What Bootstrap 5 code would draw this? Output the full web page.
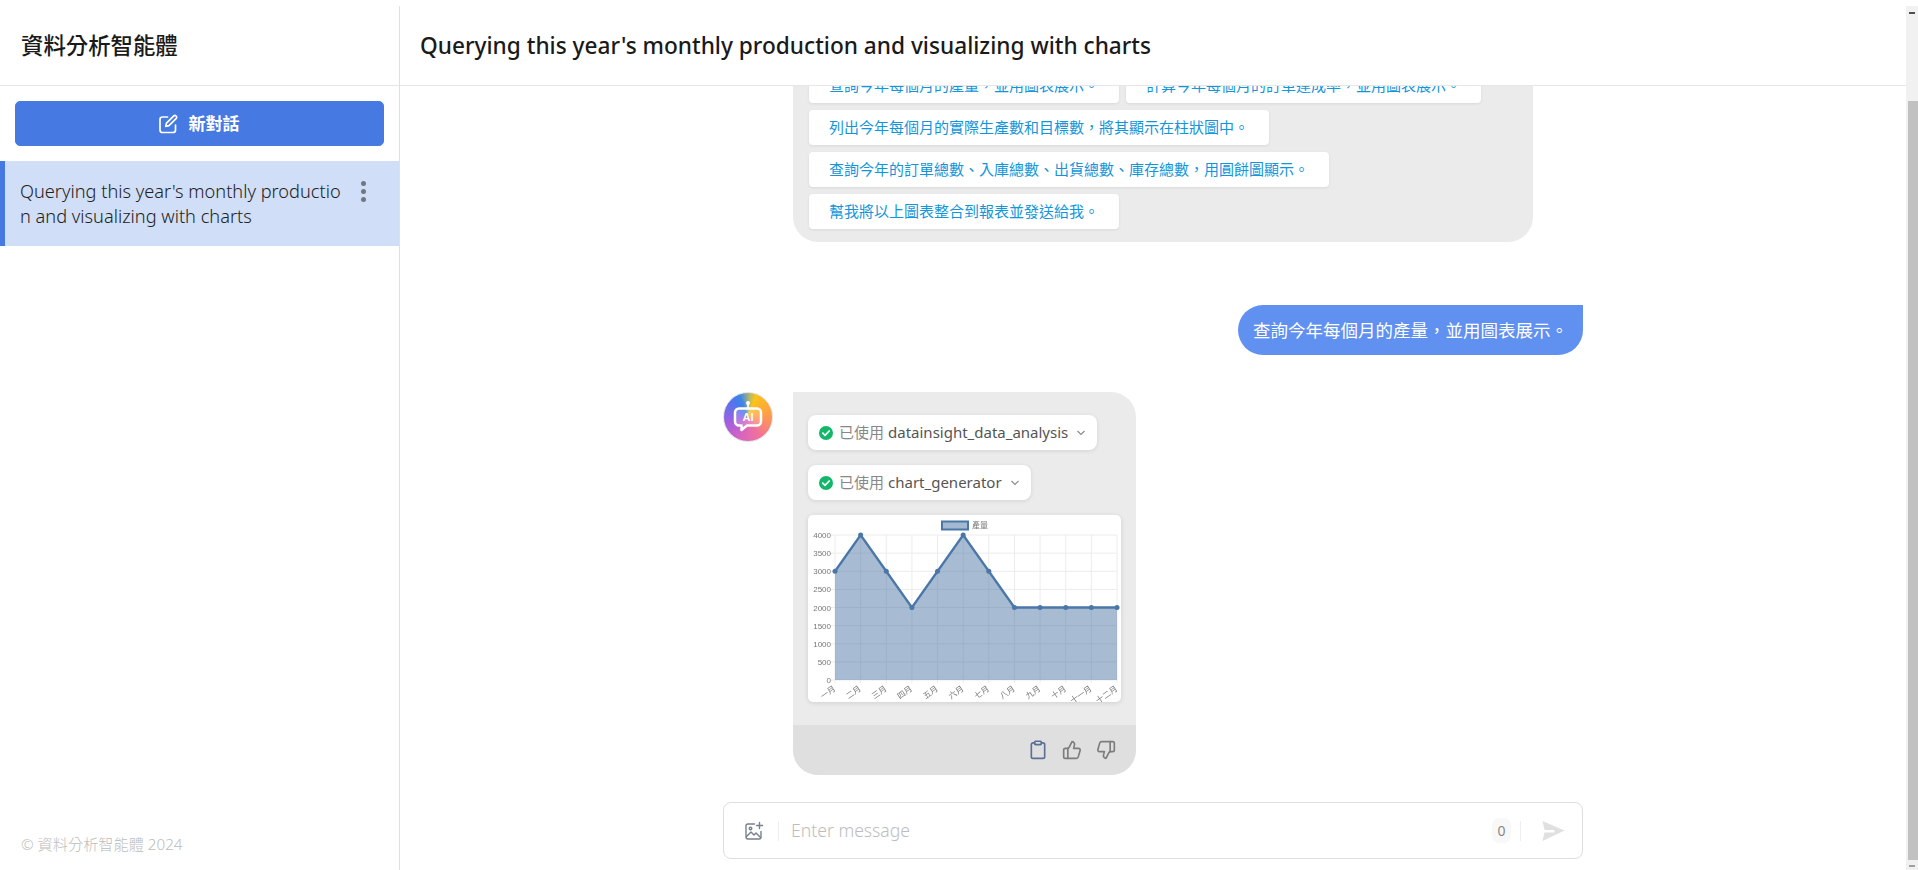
<!DOCTYPE html>
<html lang="zh-Hant">

<head>
    <meta charset="UTF-8">
    <meta name="viewport" content="width=device-width, initial-scale=1.0">
    <title>資料分析智能體</title>
    <link rel="stylesheet" href="https://cdn.jsdelivr.net/npm/bootstrap@5.3.2/dist/css/bootstrap.min.css">
    <style>
        html, body {
            height: 100%;
            overflow: hidden;
        }

        body {
            font-family: "Noto Sans", "Noto Sans CJK TC", sans-serif;
            background-color: #fff;
            padding-top: 6px;
            color: #333;
        }

        .app-wrap { height: 100%; }

        .side-panel {
            width: 400px;
            border-right: 1px solid #e0e0e0;
        }

        .head-bar {
            height: 80px;
            border-bottom: 1px solid #e6e6e6;
            font-size: 22.4px;
            font-weight: 500;
            color: #1a1a1a;
        }

        .side-head { padding-left: 21px; }
        .main-head { padding-left: 20px; font-size: 22.65px; }

        .new-chat {
            height: 45px;
            margin: 15px 15px;
            padding-right: 14px;
            background-color: #4679e2;
            border-color: #4679e2;
            border-radius: 5px;
            font-size: 17px;
            font-weight: 700;
            gap: 11px;
        }

        .new-chat:hover { background-color: #4679e2; border-color: #4679e2; }

        .session-item {
            height: 85px;
            background-color: #d0def7;
            border-left: 5px solid #4679e2;
            padding: 18px 54px 0 15px;
            font-size: 18.2px;
            font-weight: 300;
            line-height: 25px;
            word-break: break-all;
            color: #222;
        }

        .kebab {
            top: 20px;
            right: 32px;
            width: 6px;
            gap: 3px;
        }

        .kebab i {
            width: 5px;
            height: 5px;
            border-radius: 50%;
            background-color: #6f7785;
        }

        .copy-line {
            padding: 0 0 14px 21px;
            font-size: 15.2px;
            font-weight: 300;
            color: #bdbdbd;
        }

        .chat-scroll {
            min-height: 0;
            overflow: hidden;
        }

        .chat-col { width: 860px; }

        .bubble-ai {
            background-color: #ebebeb;
            border-radius: 0 25px 25px 25px;
            overflow: hidden;
        }

        .suggest-box {
            width: 740px;
            margin-left: 70px;
            padding: 16px 16px 13px;
            gap: 7px;
        }

        .suggest-chip {
            height: 35px;
            padding: 0 20px;
            background-color: #fff;
            border-radius: 4px;
            box-shadow: 0 1px 3px rgba(0, 0, 0, .08);
            color: #1296db;
            font-size: 15px;
            line-height: 35px;
            white-space: nowrap;
        }

        .bubble-user {
            margin-top: 63px;
            margin-bottom: 37px;
            height: 50px;
            padding: 0 15px;
            background-color: #6090f0;
            border-radius: 25px 0 25px 25px;
            color: #fff;
            font-size: 17.5px;
            line-height: 50px;
        }

        .bot-avatar {
            width: 50px;
            height: 50px;
            margin-right: 20px;
            border: 1px solid #e2e2e2;
            border-radius: 50%;
            background: conic-gradient(from 20deg, #fcc419 0deg, #ff9f45 60deg, #f0719c 130deg, #d764c0 180deg, #a15ee0 235deg, #4a78ee 300deg, #3f86e6 320deg, #b5b86a 345deg, #fcc419 360deg);
        }

        .bot-avatar svg { width: 30px; height: 34px; }

        .ai-text {
            font-family: "Liberation Sans", sans-serif;
            font-size: 11px;
            font-weight: 700;
            fill: #fff;
        }

        .ai-content {
            padding: 23px 15px 23px 15px;
            gap: 15px;
        }

        .tool-chip {
            height: 35px;
            padding: 0 11px;
            background-color: #fff;
            border-radius: 8px;
            box-shadow: 0 1px 4px rgba(0, 0, 0, .1);
            font-size: 15px;
            color: #555;
            white-space: nowrap;
        }

        .tool-chip em {
            font-style: normal;
            color: #888;
            margin: 0 4px 0 6px;
        }

        .chart-box {
            width: 313px;
            height: 187px;
            background-color: #fff;
            border-radius: 5px;
            box-shadow: 0 1px 5px rgba(0, 0, 0, .12);
            overflow: hidden;
        }

        .chart-box svg {
            display: block;
            filter: blur(.4px);
        }

        .chart-box text {
            font-family: "Liberation Sans", "Noto Sans CJK TC", sans-serif;
            font-size: 8px;
            fill: #777;
        }

        .ai-foot {
            height: 50px;
            background-color: #dfdfdf;
            padding-right: 20px;
            gap: 14px;
        }

        .input-bar {
            width: 860px;
            height: 57px;
            margin: 27px 0 11px;
            border: 1px solid #dedede;
            border-radius: 8px;
        }

        .input-field {
            border: 0;
            outline: 0;
            min-width: 0;
            font-size: 17.6px;
            font-weight: 300;
            color: #333;
            padding: 0 0 0 12px;
        }

        .input-field::placeholder { color: #bdbdbd; }

        .image-btn {
            width: 55px;
            padding-left: 20px;
            height: 20px;
            border-right: 1px solid #eee;
        }

        .count-pill {
            width: 19px;
            height: 25px;
            background-color: #f8f8f8;
            border-radius: 7px;
            font-size: 14px;
            line-height: 25px;
            color: #888;
            text-align: center;
        }

        .send-wrap {
            height: 20px;
            margin: 0 17px 0 9px;
            padding-left: 20px;
            border-left: 1px solid #eee;
        }

        .fake-scroll {
            width: 12px;
            background-color: #f1f1f1;
        }

        .fake-scroll b {
            display: block;
            height: 95px;
            background: linear-gradient(#505050, #505050) no-repeat 3px 6px / 6px 2px;
        }

        .fake-scroll i {
            display: block;
            flex: 1;
            margin-left: 2px;
            background-color: #c1c1c1;
        }

        .fake-scroll u {
            display: block;
            height: 10px;
            background: linear-gradient(#a0a0a0, #a0a0a0) no-repeat 3px 5px / 6px 2px;
        }
    </style>
</head>

<body>
    <div class="app-wrap d-flex">
        <!-- Sidebar -->
        <aside class="side-panel d-flex flex-column flex-shrink-0">
            <div class="head-bar side-head d-flex align-items-center">資料分析智能體</div>
            <button type="button" class="btn btn-primary new-chat d-flex align-items-center justify-content-center">
                <svg width="20" height="20" viewBox="0 0 20 20" fill="none" stroke="#fff" stroke-width="1.7" stroke-linecap="round" stroke-linejoin="round">
                    <path d="M9.5 3H4a2.5 2.5 0 0 0-2 2.5V16a2.5 2.5 0 0 0 2.5 2.5H15a2.5 2.5 0 0 0 2.5-2.5v-5"/>
                    <path d="M15.8 1.8a1.8 1.8 0 0 1 2.5 2.5L11 11.6l-3.3.8.8-3.3z"/>
                </svg>
                新對話
            </button>
            <div class="session-item position-relative">
                Querying this year's monthly production and visualizing with charts
                <span class="kebab position-absolute d-flex flex-column"><i></i><i></i><i></i></span>
            </div>
            <div class="copy-line mt-auto">© 資料分析智能體 2024</div>
        </aside>

        <!-- Main -->
        <main class="d-flex flex-column flex-grow-1" style="min-width:0">
            <div class="head-bar main-head d-flex align-items-center flex-shrink-0">Querying this year's monthly production and visualizing with charts</div>

            <div class="chat-scroll flex-grow-1 d-flex flex-column justify-content-end align-items-center">
                <div class="chat-col d-flex flex-column">
                    <div class="bubble-ai suggest-box d-flex flex-wrap">
                        <span class="suggest-chip">查詢今年每個月的產量&#xFF0C;並用圖表展示。</span>
                        <span class="suggest-chip">計算今年每個月的訂單達成率&#xFF0C;並用圖表展示。</span>
                        <span class="suggest-chip">列出今年每個月的實際生產數和目標數&#xFF0C;將其顯示在柱狀圖中。</span>
                        <span class="suggest-chip">查詢今年的訂單總數、入庫總數、出貨總數、庫存總數&#xFF0C;用圓餅圖顯示。</span>
                        <span class="suggest-chip">幫我將以上圖表整合到報表並發送給我。</span>
                    </div>

                    <div class="bubble-user align-self-end">查詢今年每個月的產量&#xFF0C;並用圖表展示。</div>

                    <div class="d-flex align-items-start">
                        <div class="bot-avatar d-flex align-items-center justify-content-center flex-shrink-0">
                            <svg viewBox="0 0 30 34" fill="none" stroke="#fff" stroke-width="2.5" stroke-linejoin="round">
                                <circle cx="15" cy="3" r="2" fill="#fff" stroke="none"/>
                                <path d="M15 4v4" stroke-width="1.6"/>
                                <path d="M6 8.500h18a4 4 0 0 1 4 4v9a4 4 0 0 1-4 4H14L8.500 30v-4.500H6a4 4 0 0 1-4-4v-9a4 4 0 0 1 4-4z" fill="rgba(255,255,255,.18)"/>
                                <text class="ai-text" x="15" y="21" text-anchor="middle" stroke="none">AI</text>
                            </svg>
                        </div>
                        <div class="bubble-ai flex-shrink-0">
                            <div class="ai-content d-flex flex-column align-items-start">
                                <div class="tool-chip d-flex align-items-center">
                                    <svg width="14" height="14" viewBox="0 0 14 14"><circle cx="7" cy="7" r="7" fill="#12b76a"/><path d="M3.800 7.200l2.200 2.100 4.200-4.300" fill="none" stroke="#fff" stroke-width="1.700" stroke-linecap="round" stroke-linejoin="round"/></svg>
                                    <em>已使用</em>datainsight_data_analysis
                                    <svg class="ms-2" width="10" height="6" viewBox="0 0 10 6"><path d="M1.500 1l3.500 3.500L8.500 1" fill="none" stroke="#888" stroke-width="1.100"/></svg>
                                </div>
                                <div class="tool-chip d-flex align-items-center">
                                    <svg width="14" height="14" viewBox="0 0 14 14"><circle cx="7" cy="7" r="7" fill="#12b76a"/><path d="M3.800 7.200l2.200 2.100 4.200-4.300" fill="none" stroke="#fff" stroke-width="1.700" stroke-linecap="round" stroke-linejoin="round"/></svg>
                                    <em>已使用</em>chart_generator
                                    <svg class="ms-2" width="10" height="6" viewBox="0 0 10 6"><path d="M1.500 1l3.500 3.500L8.500 1" fill="none" stroke="#888" stroke-width="1.100"/></svg>
                                </div>
                                <div class="chart-box">
                                    <svg id="prod-chart" width="313" height="187" viewBox="0 0 313 187"></svg>
                                </div>
                            </div>
                            <div class="ai-foot d-flex align-items-center justify-content-end">
                                <svg width="20" height="20" viewBox="0 0 24 24" fill="none" stroke="#5c7096" stroke-width="2" stroke-linecap="round" stroke-linejoin="round">
                                    <rect x="8" y="1.500" width="8" height="4" rx="1"/>
                                    <path d="M16 3.500h2a2 2 0 0 1 2 2V20a2 2 0 0 1-2 2H6a2 2 0 0 1-2-2V5.500a2 2 0 0 1 2-2h2"/>
                                </svg>
                                <svg width="20" height="20" viewBox="0 0 24 24" fill="none" stroke="#7d7d7d" stroke-width="2" stroke-linecap="round" stroke-linejoin="round">
                                    <path d="M7 10v12"/>
                                    <path d="M15 5.880 14 10h5.830a2 2 0 0 1 1.920 2.560l-2.330 8A2 2 0 0 1 17.500 22H4a2 2 0 0 1-2-2v-8a2 2 0 0 1 2-2h2.760a2 2 0 0 0 1.790-1.110L12 2h0a3.130 3.130 0 0 1 3 3.880Z"/>
                                </svg>
                                <svg width="20" height="20" viewBox="0 0 24 24" fill="none" stroke="#7d7d7d" stroke-width="2" stroke-linecap="round" stroke-linejoin="round">
                                    <path d="M17 14V2"/>
                                    <path d="M9 18.120 10 14H4.170a2 2 0 0 1-1.920-2.560l2.330-8A2 2 0 0 1 6.500 2H20a2 2 0 0 1 2 2v8a2 2 0 0 1-2 2h-2.760a2 2 0 0 0-1.790 1.110L12 22h0a3.130 3.130 0 0 1-3-3.880Z"/>
                                </svg>
                            </div>
                        </div>
                    </div>
                </div>
            </div>

            <!-- Input -->
            <div class="input-bar d-flex align-items-center flex-shrink-0 align-self-center">
                <div class="image-btn d-flex align-items-center flex-shrink-0">
                    <svg width="20" height="20" viewBox="0 0 20 20" fill="none" stroke="#78808c" stroke-width="1.400" stroke-linecap="round" stroke-linejoin="round">
                        <path d="M10.500 3H4a2 2 0 0 0-2 2v11a2 2 0 0 0 2 2h11a2 2 0 0 0 2-2v-5.500"/>
                        <path d="M2.500 15.500 7 11l3 3 2-2 4.500 4.500"/>
                        <circle cx="6.500" cy="7.500" r="1.300"/>
                        <path d="M15.500 1.500v6M12.500 4.500h6"/>
                    </svg>
                </div>
                <input class="input-field flex-grow-1" type="text" placeholder="Enter message">
                <span class="count-pill flex-shrink-0">0</span>
                <div class="send-wrap d-flex align-items-center flex-shrink-0">
                    <svg width="24" height="22" viewBox="0 0 24 22"><path d="M1.500 1 23.500 10.500 1.500 21 3.500 12.500H13.500V10H3.500z" fill="#e0e0e0"/></svg>
                </div>
            </div>
        </main>

        <div class="fake-scroll d-flex flex-column flex-shrink-0"><b></b><i></i><u></u></div>
    </div>

    <script>
        // monthly production chart
        const months = ['一月', '二月', '三月', '四月', '五月', '六月', '七月', '八月', '九月', '十月', '十一月', '十二月'];
        const values = [3000, 4000, 3000, 2000, 3000, 4000, 3000, 2000, 2000, 2000, 2000, 2000];
        const left = 27, right = 309, top0 = 20, bottom = 165;
        const xAt = i => left + (right - left) * i / 11;
        const yAt = v => bottom - (bottom - top0) * v / 4000;

        let html = '<rect x="134" y="6.500" width="26" height="8" fill="#a3b9d2" stroke="#4a76a8" stroke-width="2"/><text x="164" y="13">產量</text>';
        for (let v = 0; v <= 4000; v += 500) {
            html += `<line x1="${left - 4}" x2="${right}" y1="${yAt(v)}" y2="${yAt(v)}" stroke="#ececec"/>`;
            html += `<text x="${left - 4}" y="${yAt(v) + 3}" text-anchor="end">${v}</text>`;
        }
        months.forEach((m, i) => {
            html += `<line x1="${xAt(i)}" x2="${xAt(i)}" y1="${top0}" y2="${bottom + 3}" stroke="#ececec"/>`;
            html += `<text transform="translate(${xAt(i) + 1} ${bottom + 10}) rotate(-35)" text-anchor="end">${m}</text>`;
        });
        const pts = values.map((v, i) => `${xAt(i)},${yAt(v)}`).join(' ');
        html += `<polygon points="${left},${bottom} ${pts} ${right},${bottom}" fill="rgba(72,114,160,.48)"/>`;
        html += `<polyline points="${pts}" fill="none" stroke="#4a76a8" stroke-width="2.300"/>`;
        values.forEach((v, i) => {
            html += `<circle cx="${xAt(i)}" cy="${yAt(v)}" r="2.500" fill="#4a76a8"/>`;
        });
        document.getElementById('prod-chart').innerHTML = html;
    </script>
    <script src="https://cdn.jsdelivr.net/npm/bootstrap@5.3.2/dist/js/bootstrap.bundle.min.js"></script>
</body>

</html>
